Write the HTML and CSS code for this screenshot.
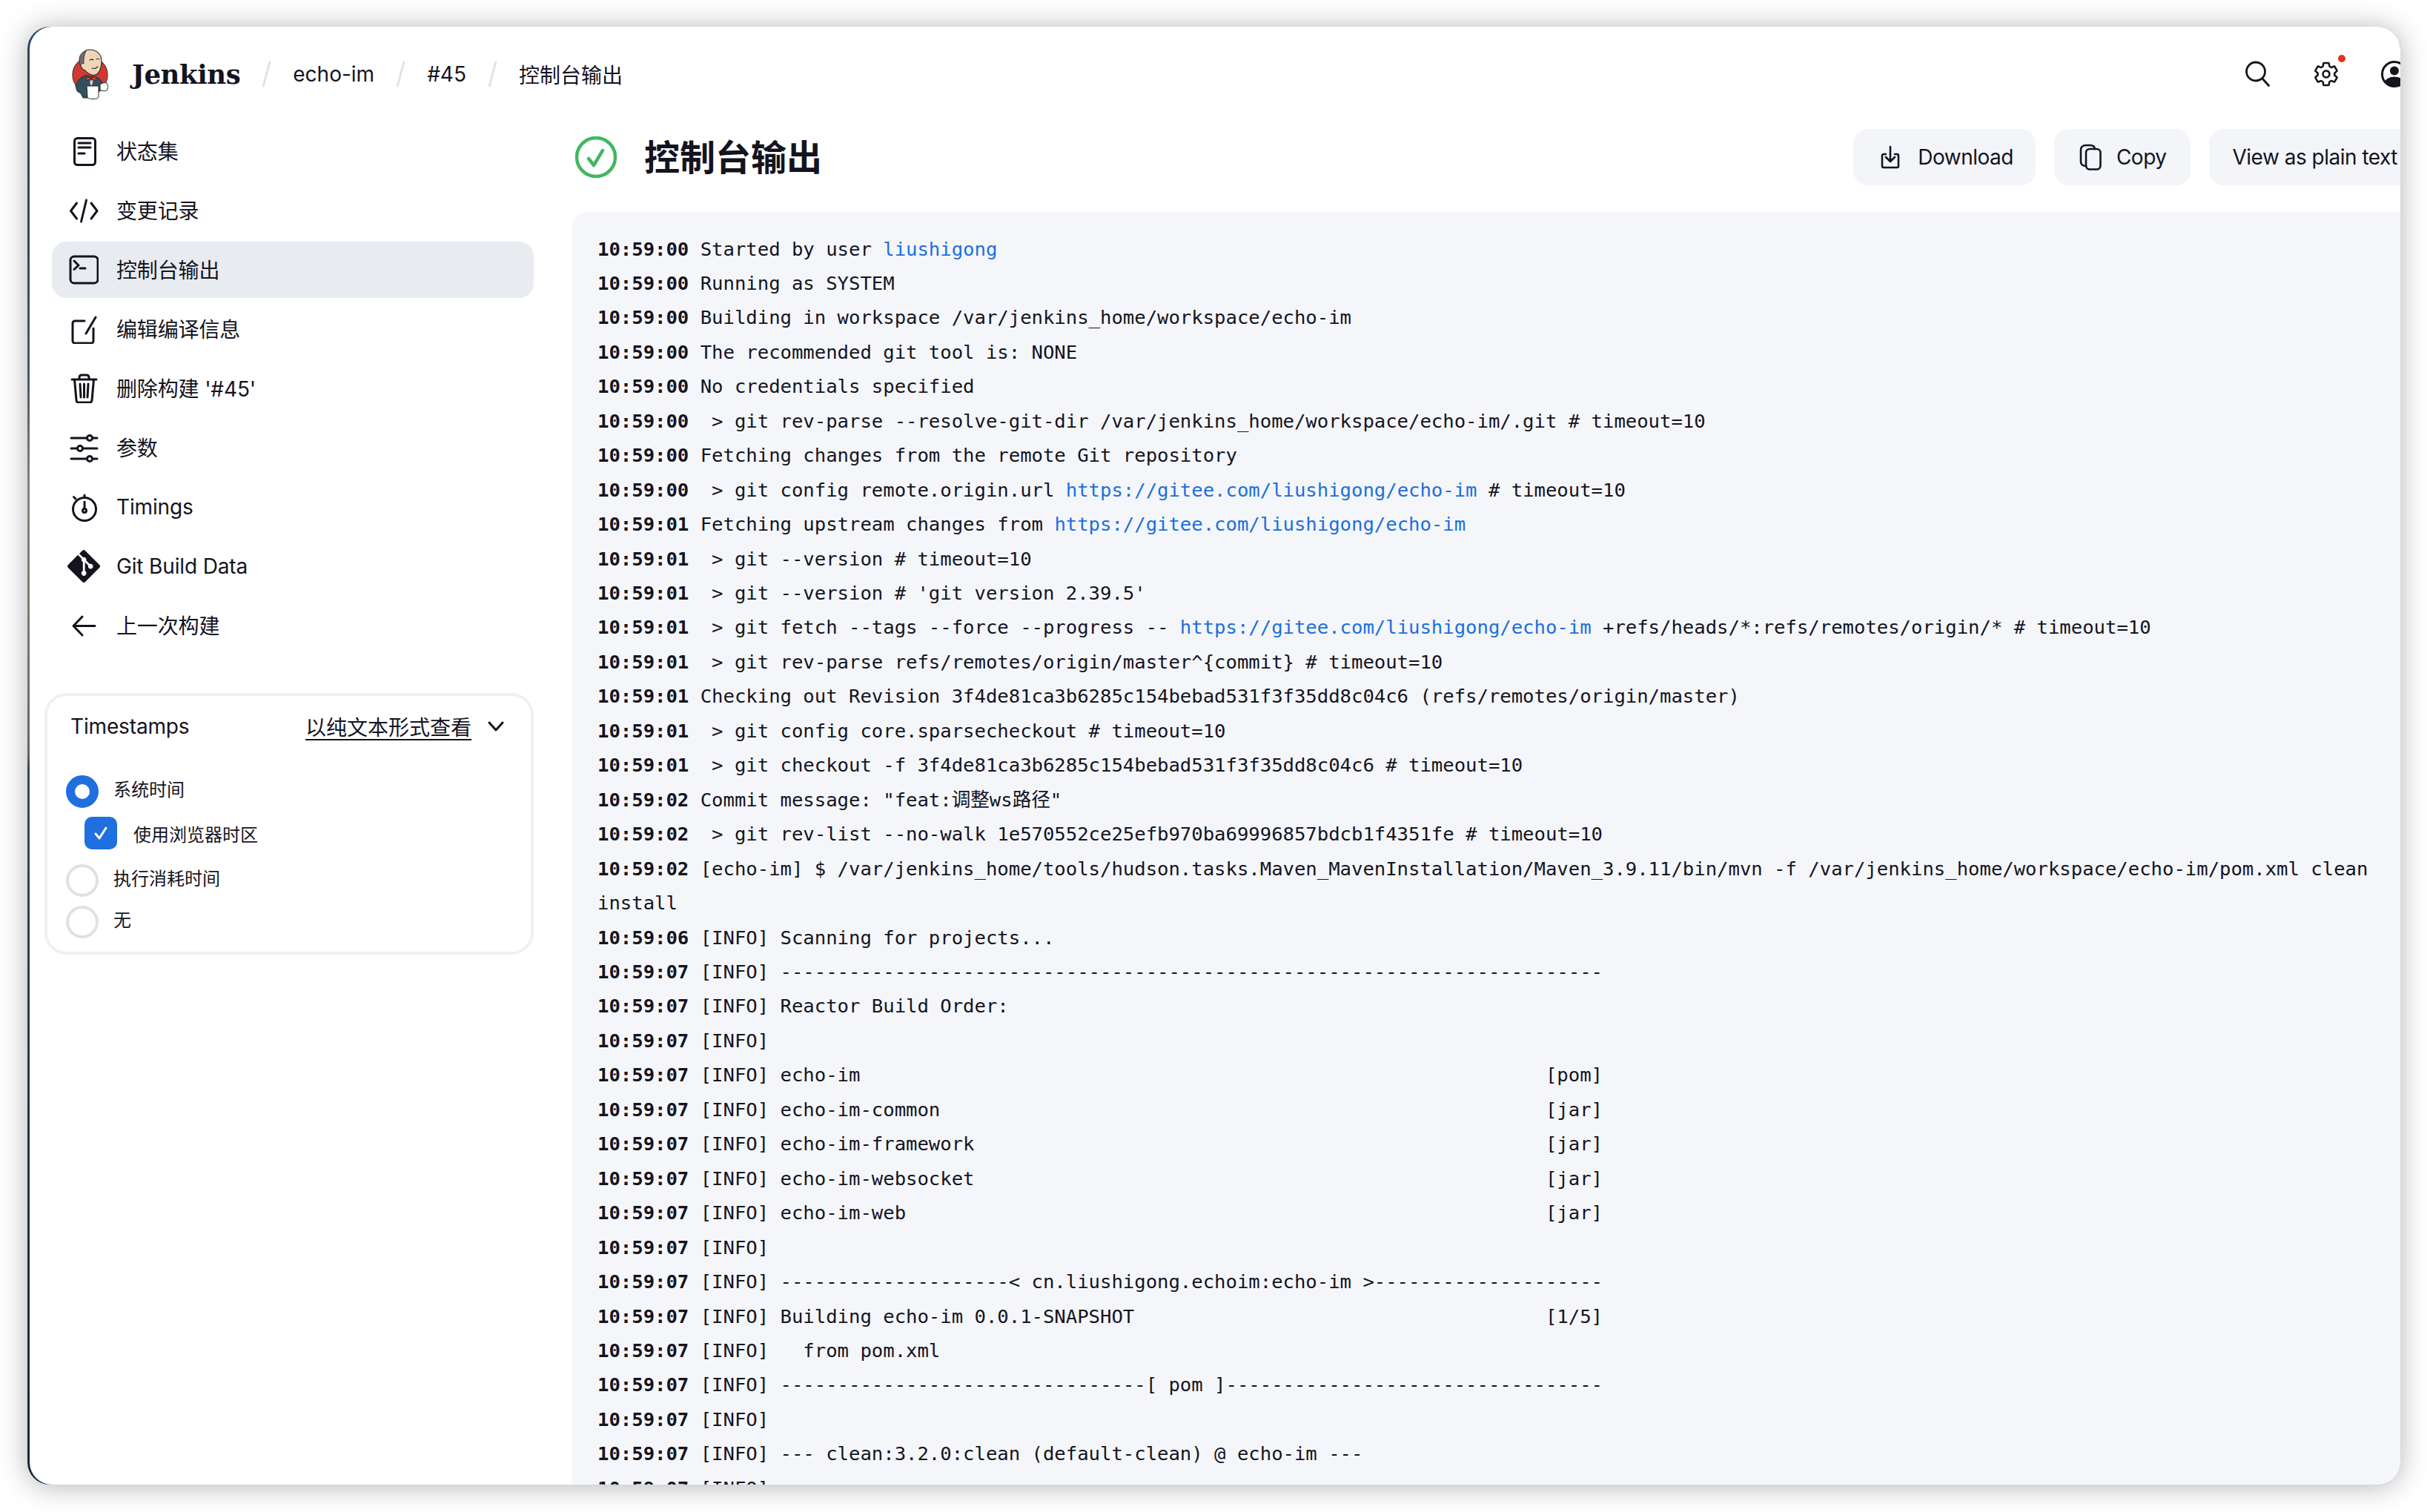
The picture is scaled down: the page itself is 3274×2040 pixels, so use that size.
FILE: index.html
```html
<!DOCTYPE html>
<html lang="zh">
<head>
<meta charset="utf-8">
<title>控制台输出</title>
<link rel="stylesheet" href="styles.css">
</head>
<body>
<div class="window">
<div class="surface">
<div class="inner">
  <header class="topbar">
    <div class="brand">
      <svg class="logo" viewBox="0 0 50 68" width="50" height="68">
        <circle cx="25.500" cy="35" r="23.600" fill="#d33833" stroke="#4a3a38" stroke-width="1.200"/>
        <path d="M6 50c3-9 9-13 14-14l12 2c6 1 10 5 11 11l-2 6-6 5-3 6H16l-3-6-5-3z" fill="#335061" stroke="#1c2a33"/>
        <path d="M12 17C12 7 18 1 25 1c9 0 16 6 16 15 0 6-1 10-3 14-2 4-6 6-10 5-4-1-7-3-9-6-2 0-6-3-6-7 0-3 0-4-1-5z" fill="#f0d6b7" stroke="#2a2a2a" stroke-width="1.100"/>
        <path d="M20 3c-5 1-9 5-9 11 0 3 0 6 1 8 1-2 4-3 5-2 0-6 0-12 3-17z" fill="#6d6b6d" stroke="#2a2a2a" stroke-width=".8"/>
        <path d="M25 15c2-1 4-1 5 0M34 14c1-1 3-1 4 0M28 26c3 1 6 0 8-2" fill="none" stroke="#2a2a2a" stroke-width="1.100" stroke-linecap="round"/>
        <path d="M21 37l6 3 6-3 1 6-7-2-7 2z" fill="#d33833" stroke="#5a1f1c" stroke-width=".8"/>
        <path d="M25 42h5l-1 6-2 2-2-3z" fill="#c9d3d8" stroke="#1c2a33" stroke-width=".6"/>
        <path d="M21 50h16v14c0 3-2 3.500-8 3.500-5 0-7-1-7-3z" fill="#fff" stroke="#2a2a2a" stroke-width="1"/>
        <path d="M39 48c2-2 7-3 9-2 2 3 2 8 0 10-3 1-7 1-9-1z" fill="#fff" stroke="#2a2a2a" stroke-width="1"/>
      </svg>
      <span class="wordmark">Jenkins</span>
    </div>
    <nav class="crumbs">
      <i class="sep"></i><a class="crumb">echo-im</a>
      <i class="sep"></i><a class="crumb">#45</a>
      <i class="sep"></i><a class="crumb">控制台输出</a>
    </nav>
    <div class="actions">
      <svg class="act" viewBox="0 0 36 36" width="36" height="36" fill="none" stroke="#14141f" stroke-width="2.800"><circle cx="15" cy="14.500" r="12.500"/><path d="M24 24l8.500 9.500" stroke-linecap="round"/></svg>
      <span class="gearbox">
        <svg class="act" viewBox="0 0 512 512" width="36" height="36" fill="none" stroke="#14141f" stroke-width="36" stroke-linejoin="round"><path d="M262.290 192.310a64 64 0 1057.400 57.400 64.130 64.130 0 00-57.400-57.400zM416.390 256a154.340 154.340 0 01-1.530 20.790l45.210 35.460a10.810 10.810 0 012.450 13.750l-42.770 74a10.810 10.810 0 01-13.140 4.590l-44.900-18.080a16.110 16.110 0 00-15.170 1.750A164.480 164.480 0 01325 400.800a15.940 15.940 0 00-8.820 12.140l-6.730 47.890a11.080 11.080 0 01-10.680 9.170h-85.540a11.110 11.110 0 01-10.690-8.870l-6.720-47.820a16.070 16.070 0 00-9-12.220 155.300 155.300 0 01-21.460-12.570 16 16 0 00-15.110-1.710l-44.890 18.070a10.810 10.810 0 01-13.140-4.580l-42.770-74a10.800 10.800 0 012.450-13.750l38.210-30a16.050 16.050 0 006-14.080c-.36-4.170-.58-8.330-.58-12.500s.21-8.270.58-12.350a16 16 0 00-6.070-13.940l-38.190-30A10.810 10.810 0 0149.480 186l42.770-74a10.810 10.810 0 0113.140-4.590l44.900 18.080a16.110 16.110 0 0015.170-1.750A164.480 164.480 0 01187 111.200a15.940 15.940 0 008.820-12.140l6.730-47.890A11.080 11.080 0 01213.230 42h85.540a11.110 11.110 0 0110.690 8.870l6.720 47.820a16.070 16.070 0 009 12.220 155.300 155.300 0 0121.460 12.570 16 16 0 0015.110 1.710l44.890-18.070a10.810 10.810 0 0113.140 4.580l42.770 74a10.800 10.800 0 01-2.450 13.750l-38.210 30a16.050 16.050 0 00-6.050 14.080c.33 4.140.55 8.300.55 12.470z"/></svg>
        <i class="dot"></i>
      </span>
      <svg class="act" viewBox="0 0 36 36" width="36" height="36"><defs><clipPath id="uc"><circle cx="18" cy="18" r="17"/></clipPath></defs><circle cx="18" cy="18" r="16.500" fill="none" stroke="#14141f" stroke-width="3"/><circle cx="18" cy="13.500" r="6" fill="#14141f"/><ellipse cx="18" cy="30" rx="13" ry="8.500" fill="#14141f" clip-path="url(#uc)"/></svg>
    </div>
  </header>

  <div class="body">
    <aside class="sidebar">
      <ul class="tasks">
        <li class="task"><svg class="ico" viewBox="0 0 40 40"><rect x="7.500" y="2.500" width="28" height="36" rx="4"/><path d="M13 9h16M13 15h16M13 23h8"/></svg><span class="cjk">状态集</span></li>
        <li class="task"><svg class="ico" viewBox="0 0 40 40"><path d="M10.500 10L2.500 20.500l8 10.500M30 10l8 10.500L30 31M23.500 6l-7 29"/></svg><span class="cjk">变更记录</span></li>
        <li class="task active"><svg class="ico" viewBox="0 0 40 40"><rect x="2" y="2" width="37" height="36" rx="5"/><path d="M7 8l6 6-6 5.500M15 18h7"/></svg><span class="cjk">控制台输出</span></li>
        <li class="task"><svg class="ico" viewBox="0 0 40 40"><path d="M21 9H8a3 3 0 00-3 3v24a3 3 0 003 3h22a3 3 0 003-3V19M23 26L36 4"/></svg><span class="cjk">编辑编译信息</span></li>
        <li class="task"><svg class="ico" viewBox="0 0 40 40"><path d="M4 8h33M14 8V5a3 3 0 013-3h7a3 3 0 013 3v3M7.500 8l2.500 28a3 3 0 003 3h15a3 3 0 003-3l2.500-28M15 14l1 18M20.500 14v18M26 14l-1 18"/></svg><span class="cjk">删除构建 '#45'</span></li>
        <li class="task"><svg class="ico" viewBox="0 0 40 40"><path d="M3 7h21M32 7h6M3 21h8M19 21h19M3 35h21M32 35h6"/><circle cx="28" cy="7" r="3.500"/><circle cx="15" cy="21" r="3.500"/><circle cx="28" cy="35" r="3.500"/></svg><span class="cjk">参数</span></li>
        <li class="task"><svg class="ico" viewBox="0 0 40 40"><circle cx="21" cy="23" r="15.500"/><path d="M21 7V4M9 9l-2.500-2.500" /><path d="M21 13v9"/><circle cx="21" cy="25" r="2.500"/></svg><span>Timings</span></li>
        <li class="task"><svg class="ico-solid" viewBox="0 0 448 512" width="50" height="50"><path d="M439.550 236.050L244 40.450a28.870 28.870 0 0 0-40.810 0l-40.660 40.630 51.520 51.520c27.060-9.140 52.680 16.770 43.390 43.680l49.660 49.660c34.230-11.800 61.180 31 35.500 56.690-26.490 26.490-70.210-2.870-56-37.340L240.220 199v121.850c25.300 12.540 22.260 41.850 9.080 55a34.340 34.340 0 0 1-48.550 0c-17.570-17.600-11.070-46.910 11.250-56v-123c-20.800-8.510-24.600-30.740-18.640-45L142.570 101 8.450 235.140a28.860 28.860 0 0 0 0 40.810l195.610 195.600a28.860 28.860 0 0 0 40.800 0l194.690-194.690a28.860 28.860 0 0 0 0-40.810z"/></svg><span>Git Build Data</span></li>
        <li class="task"><svg class="ico" viewBox="0 0 40 40"><path d="M35 20.500H7M18 8L6 20.500 18 33"/></svg><span class="cjk">上一次构建</span></li>
      </ul>

      <section class="card">
        <div class="card-head">
          <span class="tight">Timestamps</span>
          <a class="plain">以纯文本形式查看</a>
          <svg class="chev" viewBox="0 0 22 14" width="22" height="14"><path d="M2 2l9 10 9-10"/></svg>
        </div>
        <div class="opts">
          <label class="opt"><i class="radio on"></i><span class="lab">系统时间</span></label>
          <label class="opt sub"><i class="check"><svg viewBox="0 0 24 24" width="24" height="24"><path d="M5 13l5 6L19 5"/></svg></i><span>使用浏览器时区</span></label>
          <label class="opt"><i class="radio"></i><span class="lab">执行消耗时间</span></label>
          <label class="opt"><i class="radio"></i><span class="lab">无</span></label>
        </div>
      </section>
    </aside>

    <main class="main">
      <div class="title-row">
        <svg class="status" viewBox="0 0 56 56" width="56" height="56"><circle cx="28" cy="28" r="26" /><path d="M18 30l7 9 12-20"/></svg>
        <h1>控制台输出</h1>
        <div class="btns">
          <a class="btn dl"><svg class="bi" viewBox="0 0 26 32" width="26" height="32"><path d="M7 12H4a2 2 0 00-2 2v14a2 2 0 002 2h18a2 2 0 002-2V14a2 2 0 00-2-2h-3M13 2v20M7 16l6 6 6-6"/></svg>Download</a>
          <a class="btn cp"><svg class="bi" viewBox="0 0 30 36" width="30" height="36"><rect x="9" y="7" width="19.500" height="27.500" rx="5"/><path d="M9 30c-4 0-7-2-7-6V8c0-4 3-6 7-6h6c3 0 6 2 6 5"/></svg>Copy</a>
          <a class="btn vw">View as plain text</a>
        </div>
      </div>
      <div class="console">
<div class="l"><b>10:59:00</b> Started by user <a>liushigong</a></div>
<div class="l"><b>10:59:00</b> Running as SYSTEM</div>
<div class="l"><b>10:59:00</b> Building in workspace /var/jenkins_home/workspace/echo-im</div>
<div class="l"><b>10:59:00</b> The recommended git tool is: NONE</div>
<div class="l"><b>10:59:00</b> No credentials specified</div>
<div class="l"><b>10:59:00</b>  &gt; git rev-parse --resolve-git-dir /var/jenkins_home/workspace/echo-im/.git # timeout=10</div>
<div class="l"><b>10:59:00</b> Fetching changes from the remote Git repository</div>
<div class="l"><b>10:59:00</b>  &gt; git config remote.origin.url <a>https://gitee.com/liushigong/echo-im</a> # timeout=10</div>
<div class="l"><b>10:59:01</b> Fetching upstream changes from <a>https://gitee.com/liushigong/echo-im</a></div>
<div class="l"><b>10:59:01</b>  &gt; git --version # timeout=10</div>
<div class="l"><b>10:59:01</b>  &gt; git --version # 'git version 2.39.5'</div>
<div class="l"><b>10:59:01</b>  &gt; git fetch --tags --force --progress -- <a>https://gitee.com/liushigong/echo-im</a> +refs/heads/*:refs/remotes/origin/* # timeout=10</div>
<div class="l"><b>10:59:01</b>  &gt; git rev-parse refs/remotes/origin/master^{commit} # timeout=10</div>
<div class="l"><b>10:59:01</b> Checking out Revision 3f4de81ca3b6285c154bebad531f3f35dd8c04c6 (refs/remotes/origin/master)</div>
<div class="l"><b>10:59:01</b>  &gt; git config core.sparsecheckout # timeout=10</div>
<div class="l"><b>10:59:01</b>  &gt; git checkout -f 3f4de81ca3b6285c154bebad531f3f35dd8c04c6 # timeout=10</div>
<div class="l"><b>10:59:02</b> Commit message: "feat:调整ws路径"</div>
<div class="l"><b>10:59:02</b>  &gt; git rev-list --no-walk 1e570552ce25efb970ba69996857bdcb1f4351fe # timeout=10</div>
<div class="l"><b>10:59:02</b> [echo-im] $ /var/jenkins_home/tools/hudson.tasks.Maven_MavenInstallation/Maven_3.9.11/bin/mvn -f /var/jenkins_home/workspace/echo-im/pom.xml clean install</div>
<div class="l"><b>10:59:06</b> [INFO] Scanning for projects...</div>
<div class="l"><b>10:59:07</b> [INFO] ------------------------------------------------------------------------</div>
<div class="l"><b>10:59:07</b> [INFO] Reactor Build Order:</div>
<div class="l"><b>10:59:07</b> [INFO] </div>
<div class="l"><b>10:59:07</b> [INFO] echo-im                                                            [pom]</div>
<div class="l"><b>10:59:07</b> [INFO] echo-im-common                                                     [jar]</div>
<div class="l"><b>10:59:07</b> [INFO] echo-im-framework                                                  [jar]</div>
<div class="l"><b>10:59:07</b> [INFO] echo-im-websocket                                                  [jar]</div>
<div class="l"><b>10:59:07</b> [INFO] echo-im-web                                                        [jar]</div>
<div class="l"><b>10:59:07</b> [INFO] </div>
<div class="l"><b>10:59:07</b> [INFO] --------------------&lt; cn.liushigong.echoim:echo-im &gt;--------------------</div>
<div class="l"><b>10:59:07</b> [INFO] Building echo-im 0.0.1-SNAPSHOT                                    [1/5]</div>
<div class="l"><b>10:59:07</b> [INFO]   from pom.xml</div>
<div class="l"><b>10:59:07</b> [INFO] --------------------------------[ pom ]---------------------------------</div>
<div class="l"><b>10:59:07</b> [INFO] </div>
<div class="l"><b>10:59:07</b> [INFO] --- clean:3.2.0:clean (default-clean) @ echo-im ---</div>
<div class="l"><b>10:59:07</b> [INFO] </div>
      </div>
    </main>
  </div>
</div>
</div>
</div>
</body>
</html>
```
FILE: styles.css
```css
* { box-sizing: border-box; }
html, body { margin: 0; height: 100%; background: #fff; }
body {
  padding: 36px 36px 37px 37px;
  overflow: hidden;
  color: #14141f;
  font-family: Inter, "Noto Sans CJK SC", sans-serif;
  font-size: 28px;
}
.window {
  height: 100%;
  border-radius: 30px;
  background: linear-gradient(180deg, #2a4560 0, #34485a 300px, #4d5a66 480px, #8a8078 620px, #80786f 780px, #6b6560 980px, #384858 1000px, #2b3a50 1300px, #16263f 1967px);
  box-shadow: 0 2px 38px rgba(0, 0, 0, .3);
}
.surface {
  height: 100%;
  margin-left: 3px;
  border-radius: 30px;
  background: #fff;
  overflow: hidden;
}
.inner { width: 3225px; height: 100%; display: flex; flex-direction: column; }

/* top bar */
.topbar { height: 128px; flex: none; display: flex; align-items: center; padding: 0 17px 0 56px; }
.brand { display: flex; align-items: center; gap: 32px; }
.logo { display: block; }
.wordmark { font-family: "DejaVu Serif", serif; font-weight: 700; font-size: 35.500px; letter-spacing: -.4px; }
.crumbs { display: flex; align-items: center; margin-left: 34px; }
.crumb { font-size: 28px; }
.sep { display: block; width: 3px; height: 36px; margin: 0 34px; background: #dfe2e8; transform: rotate(15deg); border-radius: 2px; }
.sep:first-child { margin-left: 0; }
.actions { margin-left: auto; display: flex; align-items: center; gap: 56px; }
.act { display: block; }
.gearbox { position: relative; display: block; }
.dot { position: absolute; top: -8px; right: -8px; width: 10px; height: 10px; border-radius: 50%; background: #e6331f; }

/* layout */
.body { flex: 1; min-height: 0; display: grid; grid-template-columns: 660px 1fr; column-gap: 52px; padding-left: 20px; }

/* sidebar */
.sidebar { padding-top: 2px; }
.tasks { list-style: none; margin: 0 0 53px 10px; padding: 0; display: flex; flex-direction: column; gap: 4px; width: 650px; }
.task { height: 76px; display: flex; align-items: center; gap: 24px; padding-left: 23px; border-radius: 20px; letter-spacing: -.15px; }
.task.active { background: #e8ebf0; }
.cjk { margin-bottom: 2px; }
.ico { width: 40px; height: 40px; flex: none; fill: none; stroke: #14141f; stroke-width: 3; stroke-linecap: round; stroke-linejoin: round; }
.ico-solid { width: 50px; height: 50px; margin: 0 -5px; flex: none; fill: #14141f; }

.card { height: 353px; border: 4px solid #eef0f4; border-radius: 30px; padding: 0 31px; }
.card-head { display: flex; align-items: center; height: 81px; }
.tight { letter-spacing: -.15px; }
.plain { margin-left: auto; text-decoration: underline; text-underline-offset: 5px; }
.chev { margin-left: 22px; margin-right: 5px; fill: none; stroke: #14141f; stroke-width: 3; stroke-linecap: round; stroke-linejoin: round; }
.opts { margin: 20px 0 0 -6px; display: flex; flex-direction: column; font-size: 24px; }
.opt { height: 56px; display: flex; align-items: center; gap: 20px; }
.opt.sub { padding-left: 25px; gap: 22px; margin-bottom: 8px; }
.lab { margin-bottom: 9px; }
.radio { display: block; width: 44px; height: 44px; border-radius: 50%; border: 4px solid #dfe1e6; background: #fff; flex: none; }
.radio.on { border: 12px solid #1f6fe0; }
.check { display: flex; align-items: center; justify-content: center; width: 44px; height: 44px; border-radius: 10px; background: #1f6fe0; flex: none; }
.check svg { fill: none; stroke: #fff; stroke-width: 3; stroke-linecap: round; stroke-linejoin: round; }

/* main */
.main { min-width: 0; display: flex; flex-direction: column; padding-top: 10px; min-height: 0; }
.title-row { display: flex; align-items: center; height: 76px; flex: none; padding-left: 4px; }
.status { flex: none; fill: none; stroke: #3fb860; stroke-width: 4.500; stroke-linecap: round; stroke-linejoin: round; }
h1 { margin: 0 0 6px 37px; font-size: 48px; font-weight: 700; }
.btns { margin-left: auto; display: flex; gap: 25px; letter-spacing: -.5px; }
.btn { height: 76px; display: flex; align-items: center; background: #f3f5f9; border-radius: 20px; white-space: nowrap; }
.dl { padding: 0 30px 0 37px; gap: 24px; }
.cp { padding: 0 33px 0 34px; gap: 20px; }
.vw { padding: 0 31px; }
.bi { flex: none; fill: none; stroke: #14141f; stroke-width: 2.600; stroke-linecap: round; stroke-linejoin: round; }

.console {
  flex: 1;
  min-height: 0;
  margin-top: 36px;
  padding: 26.500px 34px 0;
  background: #f4f6fa;
  border-radius: 20px 20px 0 0;
  overflow: hidden;
  font-family: "DejaVu Sans Mono", "Noto Sans CJK SC", monospace;
  font-size: 25.600px;
  line-height: 46.450px;
}
.l { white-space: pre-wrap; }
.l b { font-weight: 700; }
.l a { color: #1c6fdb; }
```
